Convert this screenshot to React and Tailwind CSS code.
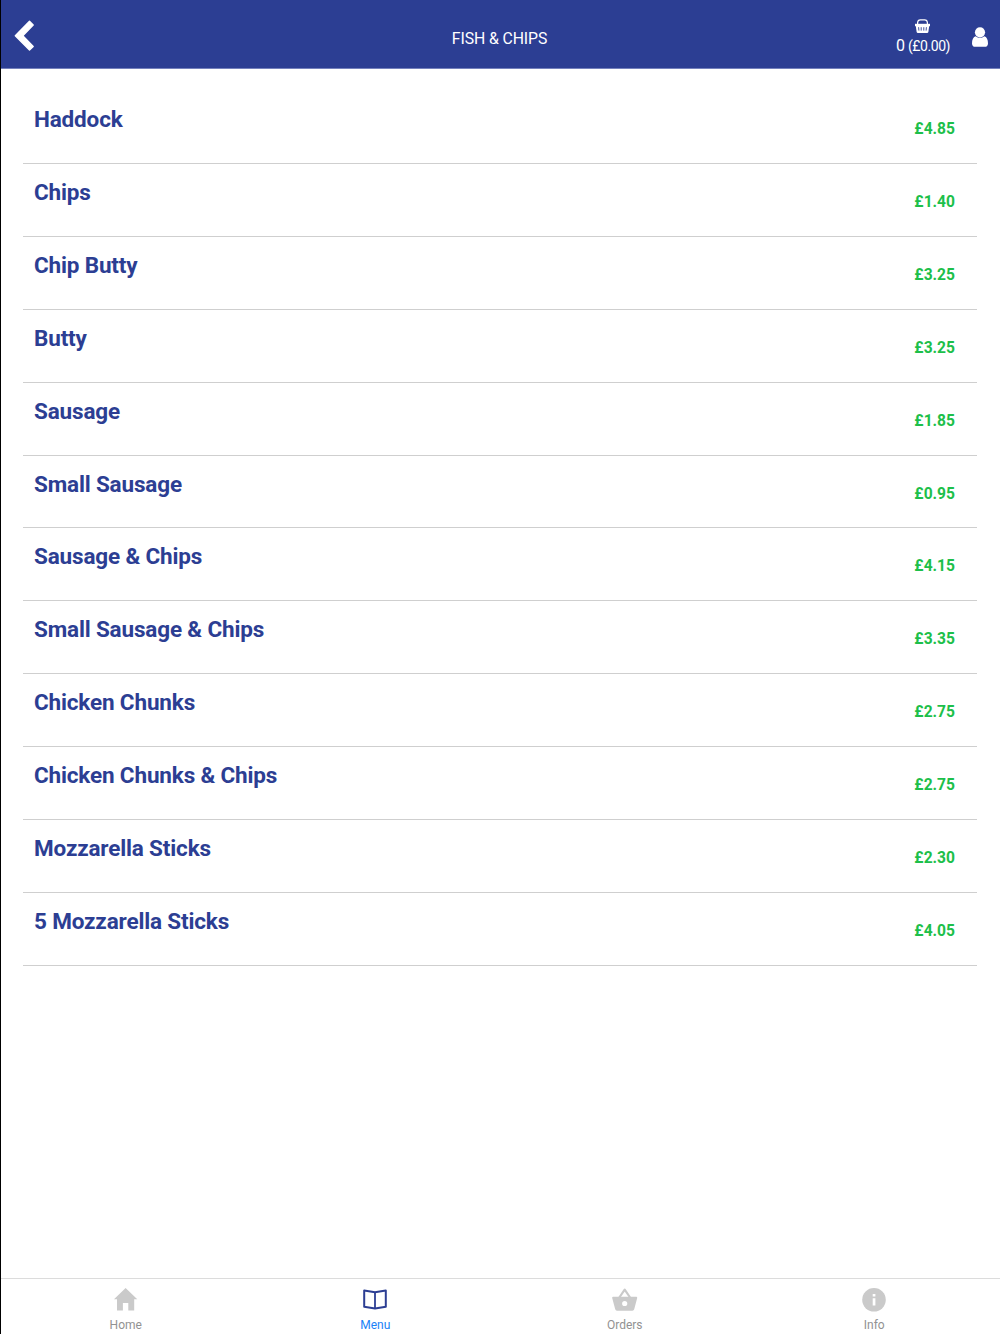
import React, { useState } from 'react';

const items = [
  { id: 1, name: 'Haddock', price: '4.85' },
  { id: 2, name: 'Chips', price: '1.40' },
  { id: 3, name: 'Chip Butty', price: '3.25' },
  { id: 4, name: 'Butty', price: '3.25' },
  { id: 5, name: 'Sausage', price: '1.85' },
  { id: 6, name: 'Small Sausage', price: '0.95' },
  { id: 7, name: 'Sausage & Chips', price: '4.15' },
  { id: 8, name: 'Small Sausage & Chips', price: '3.35' },
  { id: 9, name: 'Chicken Chunks', price: '2.75' },
  { id: 10, name: 'Chicken Chunks & Chips', price: '2.75' },
  { id: 11, name: 'Mozzarella Sticks', price: '2.30' },
  { id: 12, name: '5 Mozzarella Sticks', price: '4.05' },
];

// HEADER ICONS
const BackIcon = () => (
  <svg width="22" height="32" viewBox="0 0 22 32" fill="currentColor" stroke="currentColor" strokeWidth="1.4" strokeLinejoin="round">
    <path d="M16.5 1.3 20.2 5 9.8 15.7l10.4 10.7-3.7 3.7L2.3 15.7z" />
  </svg>
);

const BasketIcon = () => (
  <svg width="15" height="14" viewBox="0 0 15 14" fill="none" stroke="currentColor">
    <path d="M2.6 6V3.6Q2.8.8 5.4.8h4.2q2.6 0 2.8 2.8V6" strokeWidth="1.2" />
    <path d="M0 4.8h15v2.4H0z" fill="currentColor" stroke="none" />
    <path d="M.8 7h13.4l-.8 5.8q-.2 1.2-1.3 1.2H2.9q-1.1 0-1.3-1.2z" fill="currentColor" stroke="none" />
    <path d="M3.6 8.2l.3 3.4M6.2 8.2v3.4M8.8 8.2v3.4M11.4 8.2l-.3 3.4" stroke="#2c3e93" strokeWidth=".9" />
  </svg>
);

const UserIcon = () => (
  <svg width="16" height="20" viewBox="0 0 16 20" fill="currentColor">
    <circle cx="8" cy="5.3" r="5.1" />
    <path d="M3.8 9.2C1.2 9.8 0 12.6 0 16.4c0 2 1.3 3.4 3.2 3.4h9.6c1.9 0 3.2-1.4 3.2-3.4 0-3.8-1.2-6.6-3.8-7.2-2.4 2.2-6 2.2-8.4 0z" />
  </svg>
);

// TAB ICONS
const HomeIcon = () => (
  <svg width="24" height="24" viewBox="0 0 24 24" fill="#cacaca">
    <path d="M11.6 0 23.3 11.3H20.2V22.6H14.3V15H8.9v7.6H3V11.3H-.1z" />
  </svg>
);

const BookIcon = () => (
  <svg width="24" height="24" viewBox="0 0 24 24" fill="none" stroke="#2c3e93" strokeWidth="2" strokeLinejoin="round">
    <path d="M12 4.2 1.2 2.4v16.4L12 20.6l10.8-1.8V2.4z" />
    <path d="M12 4.2v16.4" strokeWidth="1.8" />
  </svg>
);

const OrdersIcon = () => (
  <svg width="26" height="24" viewBox="0 0 26 24" fill="#cacaca">
    <path
      fillRule="evenodd"
      d="M1.1 8.8h23.2q1.1 0 .9 1.1l-3 11.4q-.4 1.4-1.8 1.4H5q-1.4 0-1.8-1.4L.2 9.9q-.2-1.1.9-1.1zM12.7 12.9a2.6 2.6 0 1 0 0 5.2 2.6 2.6 0 0 0 0-5.2z"
    />
    <path d="M7.3 9.5 12.7 1.6l5.4 7.9" fill="none" stroke="#cacaca" strokeWidth="2.2" strokeLinejoin="round" />
  </svg>
);

const InfoIcon = () => (
  <svg width="24" height="24" viewBox="0 0 24 24">
    <circle cx="12" cy="11.8" r="11.8" fill="#cacaca" />
    <path d="M10.7 6h2.7v2.5h-2.7zM10.7 10.2h2.7v7.4h-2.7z" fill="#fff" />
  </svg>
);

const tabs = [
  { key: 'home', label: 'Home', icon: <HomeIcon /> },
  { key: 'menu', label: 'Menu', icon: <BookIcon /> },
  { key: 'orders', label: 'Orders', icon: <OrdersIcon /> },
  { key: 'info', label: 'Info', icon: <InfoIcon /> },
];

const Header = () => (
  <header className="grid h-[69px] grid-cols-[1fr_auto_1fr] border-b border-[#7480bc] bg-[#2c3e93] text-white">
    <button className="ml-3 mt-5 self-start justify-self-start">
      <BackIcon />
    </button>
    <h1 className="pr-0.5 pt-[28px] text-[15.8px] leading-[21px] tracking-[-0.1px]">FISH &amp; CHIPS</h1>
    <div className="flex justify-end pr-3">
      <div className="flex flex-col items-center pt-[19px]">
        <BasketIcon />
        <span className="mt-[3px] text-base leading-[19px] tracking-[-0.45px]">
          0 <span className="text-[14px]">(£0.00)</span>
        </span>
      </div>
      <button className="ml-[22px] mt-[27px] self-start">
        <UserIcon />
      </button>
    </div>
  </header>
);

const MenuRow = ({ item }) => (
  <li className="flex h-[72.92px] justify-between border-b border-[#cfcfcf] pl-[11px] pr-[22px]">
    <span className="pt-[14px] text-[22.5px] font-bold leading-[29px] tracking-[-0.16px] text-[#2c3e93]">{item.name}</span>
    <span className="pt-[28px] text-[15.6px] font-bold leading-5 text-[#1dbf4a]">£{item.price}</span>
  </li>
);

const App = () => {
  const [active, setActive] = useState('menu');

  return (
    <div className="flex h-screen flex-col border-l border-black bg-white font-['Roboto',sans-serif]">
      <Header />

      <main className="flex-1 overflow-hidden pl-[22px] pr-[23px] pt-[22px]">
        <ul>
          {items.map((item) => (
            <MenuRow key={item.id} item={item} />
          ))}
        </ul>
      </main>

      <nav className="grid h-14 grid-cols-4 border-t border-[#dcdcdc] pr-px">
        {tabs.map((tab) => (
          <button
            key={tab.key}
            onClick={() => setActive(tab.key)}
            className={`flex flex-col items-center pt-[6px] text-xs ${
              active === tab.key ? 'text-[#1a82f7]' : 'text-[#929292]'
            }`}
          >
            <span className="flex h-[29px] items-center">{tab.icon}</span>
            <span className="mt-[3px] leading-4">{tab.label}</span>
          </button>
        ))}
      </nav>
    </div>
  );
};

export default App;
